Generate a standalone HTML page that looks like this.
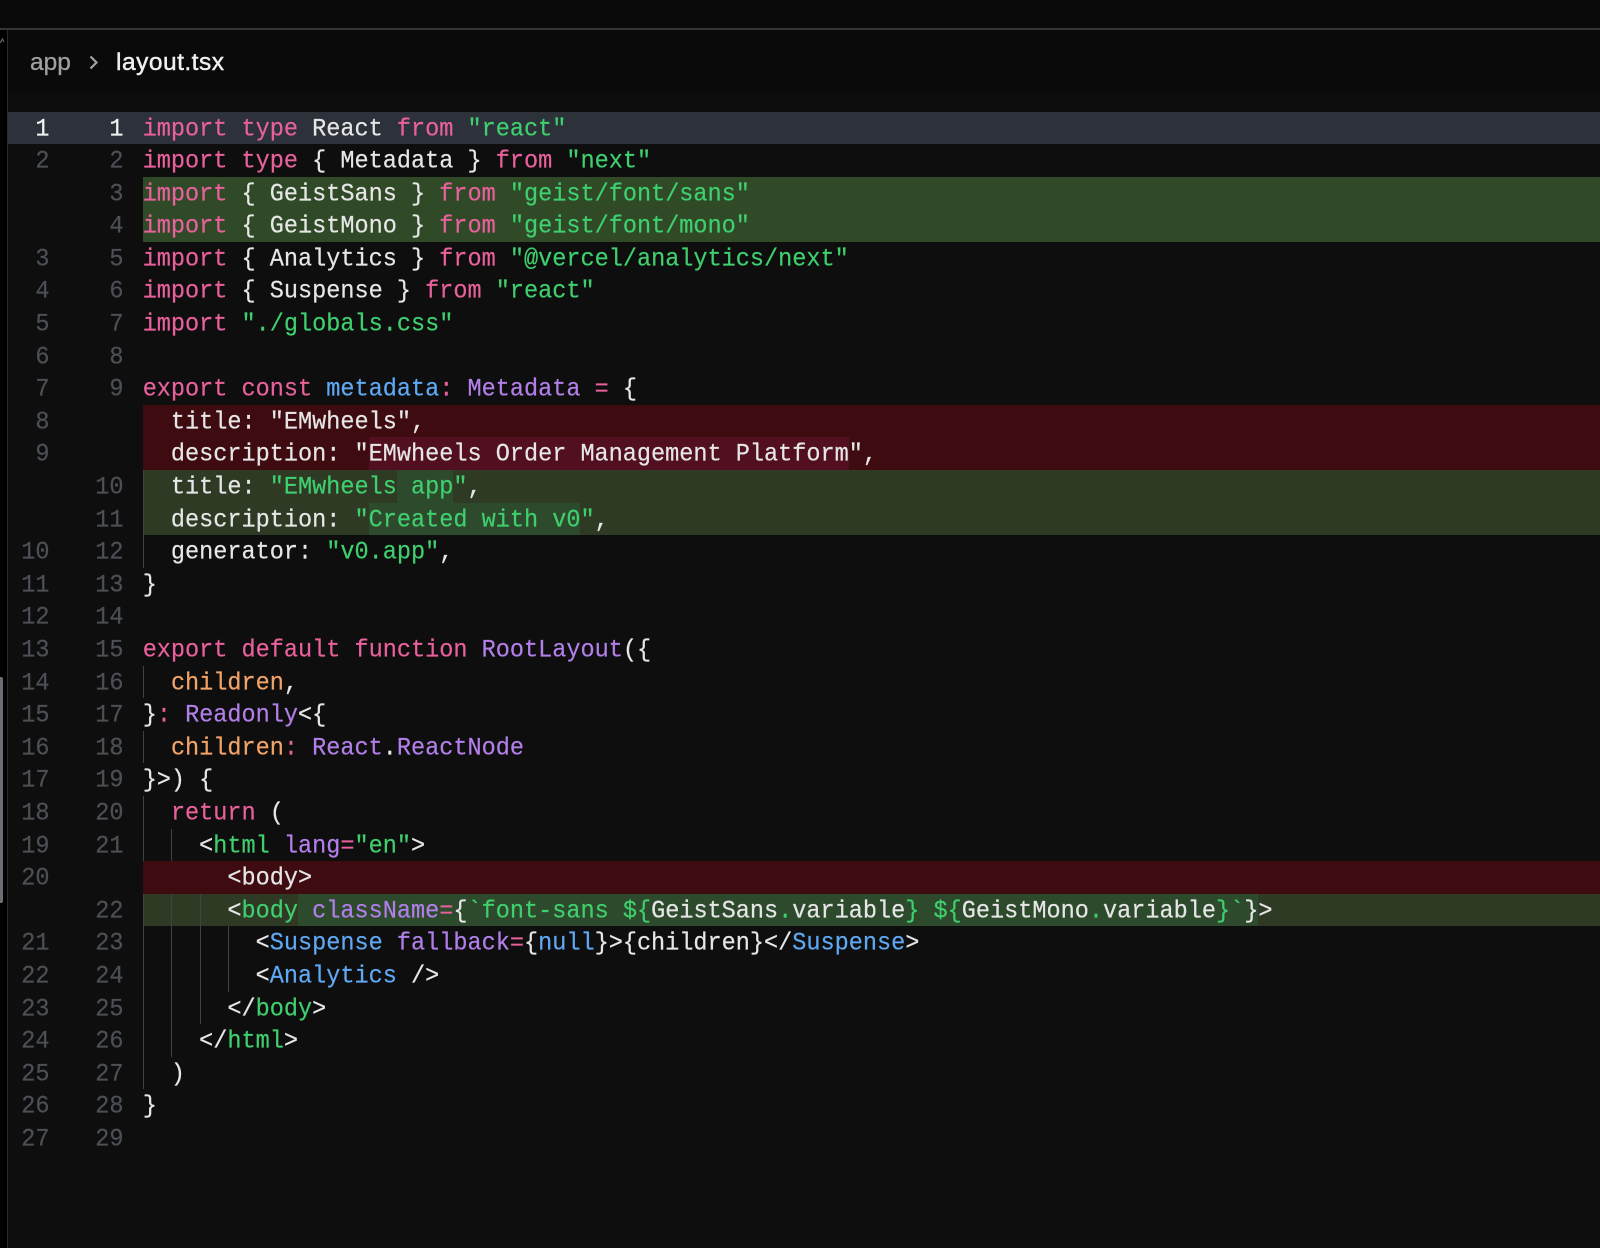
<!DOCTYPE html>
<html lang="en"><head><meta charset="utf-8"><title>layout.tsx</title>
<style>
html,body{margin:0;padding:0;background:#0e0e0e}
#p{position:relative;width:1600px;height:1248px;overflow:hidden;background:#0e0e0e}
#top{position:absolute;left:0;top:0;width:1600px;height:28px;background:#09090a}
#tl{position:absolute;left:0;top:28px;width:1600px;height:2px;background:#333435}
#left{position:absolute;left:0;top:30px;width:7px;height:1218px;background:#000}
#lb{position:absolute;left:7px;top:30px;width:1px;height:1218px;background:#2a2a2b}
#sb{position:absolute;left:0;top:677px;width:3px;height:226px;background:#6d6d73;border-radius:0 2px 2px 0}
#hd{position:absolute;left:8px;top:30px;width:1592px;height:63px;background:#0a0a0b}
#sub{position:absolute;left:8px;top:93px;width:1592px;height:18.5px;background:#0d0d0e}
.bc{position:absolute;top:48px;font:24.5px/30px "Liberation Sans",sans-serif;white-space:pre;-webkit-text-stroke:.25px currentColor;filter:blur(.3px)}
#rows{position:absolute;left:8px;top:111.5px;width:1592px;filter:blur(.3px)}
.r{position:relative;height:32.6px;font:23.54px/32.6px "Liberation Mono",monospace;color:#e6e6e6;white-space:pre}
.o,.n{position:absolute;top:0;text-align:right;color:#4c5056;transform:translateY(2px) scaleY(1.06);-webkit-text-stroke:.2px currentColor}
.o{left:0;width:41.5px}.n{left:60px;width:55.5px}
.c{position:absolute;left:134.7px;top:0;right:0;height:32.6px;overflow:hidden}
.x{display:block;font-weight:normal;transform:translateY(2px) scaleY(1.06);-webkit-text-stroke:.2px currentColor}
.cur{background:#2c313a}.cur .o,.cur .n{color:#f2f2f2}
.ga{background:#304a28}.gl{background:#2f3a25}.rd{background:#3e0b10}
.gi{background:#2e4a2d;padding:10px 0}
.ri{background:#520f20;padding:10px 0}
.g{position:absolute;top:0;width:1px;height:32.6px;background:#3f4246}
.g1{left:135px}.g2{left:163px}.g3{left:191.5px}.g4{left:219.5px}
.k{color:#e8609c}.s{color:#3fcf6e}.t{color:#b27fe9}.b{color:#5fa8f3}.f{color:#f2a368}
</style></head><body><div id="p">
<div id="top"></div><div id="tl"></div><div id="left"></div><div id="lb"></div><div id="sb"></div>
<svg style="position:absolute;left:0;top:37px" width="4" height="8"><path d="M0 6L2.5 2L4 5" fill="none" stroke="#666" stroke-width="1.2"/></svg>
<div id="hd"></div><div id="sub"></div>
<div class="bc" style="left:30px;color:#a1a1a1">app</div>
<svg style="position:absolute;left:87px;top:54px" width="13" height="17"><path d="M3.5 2.5L9.5 8.5L3.5 14.5" fill="none" stroke="#a4a4a4" stroke-width="2.2"/></svg>
<div class="bc" style="left:116px;color:#f0f0f0;-webkit-text-stroke:.45px #f0f0f0;letter-spacing:.5px">layout.tsx</div>
<div id="rows">
<div class="r cur"><span class="o">1</span><span class="n">1</span><span class="c"><b class="x"><span class="k">import type</span> React <span class="k">from</span> <span class="s">"react"</span></b></span></div>
<div class="r"><span class="o">2</span><span class="n">2</span><span class="c"><b class="x"><span class="k">import type</span> { Metadata } <span class="k">from</span> <span class="s">"next"</span></b></span></div>
<div class="r"><span class="n">3</span><span class="c ga"><b class="x"><span class="k">import</span> { GeistSans } <span class="k">from</span> <span class="s">"geist/font/sans"</span></b></span></div>
<div class="r"><span class="n">4</span><span class="c ga"><b class="x"><span class="k">import</span> { GeistMono } <span class="k">from</span> <span class="s">"geist/font/mono"</span></b></span></div>
<div class="r"><span class="o">3</span><span class="n">5</span><span class="c"><b class="x"><span class="k">import</span> { Analytics } <span class="k">from</span> <span class="s">"@vercel/analytics/next"</span></b></span></div>
<div class="r"><span class="o">4</span><span class="n">6</span><span class="c"><b class="x"><span class="k">import</span> { Suspense } <span class="k">from</span> <span class="s">"react"</span></b></span></div>
<div class="r"><span class="o">5</span><span class="n">7</span><span class="c"><b class="x"><span class="k">import</span> <span class="s">"./globals.css"</span></b></span></div>
<div class="r"><span class="o">6</span><span class="n">8</span></div>
<div class="r"><span class="o">7</span><span class="n">9</span><span class="c"><b class="x"><span class="k">export const</span> <span class="b">metadata</span><span class="k">:</span> <span class="t">Metadata</span> <span class="k">=</span> {</b></span></div>
<div class="r"><span class="o">8</span><span class="c rd"><b class="x">  title: "EMwheels",</b></span></div>
<div class="r"><span class="o">9</span><span class="c rd"><b class="x">  description: "<span class="ri">EMwheels Order Management Platform</span>",</b></span></div>
<div class="r"><span class="n">10</span><span class="c gl"><b class="x">  title: <span class="s">"EMwheels</span><span class="gi s"> app</span><span class="s">"</span>,</b></span><i class="g g1"></i></div>
<div class="r"><span class="n">11</span><span class="c gl"><b class="x">  description: <span class="s">"</span><span class="gi s">Created with v0</span><span class="s">"</span>,</b></span><i class="g g1"></i></div>
<div class="r"><span class="o">10</span><span class="n">12</span><span class="c"><b class="x">  generator: <span class="s">"v0.app"</span>,</b></span><i class="g g1"></i></div>
<div class="r"><span class="o">11</span><span class="n">13</span><span class="c"><b class="x">}</b></span></div>
<div class="r"><span class="o">12</span><span class="n">14</span></div>
<div class="r"><span class="o">13</span><span class="n">15</span><span class="c"><b class="x"><span class="k">export default function</span> <span class="t">RootLayout</span>({</b></span></div>
<div class="r"><span class="o">14</span><span class="n">16</span><span class="c"><b class="x">  <span class="f">children</span>,</b></span><i class="g g1"></i></div>
<div class="r"><span class="o">15</span><span class="n">17</span><span class="c"><b class="x">}<span class="k">:</span> <span class="t">Readonly</span>&lt;{</b></span></div>
<div class="r"><span class="o">16</span><span class="n">18</span><span class="c"><b class="x">  <span class="f">children</span><span class="k">:</span> <span class="t">React</span>.<span class="t">ReactNode</span></b></span><i class="g g1"></i></div>
<div class="r"><span class="o">17</span><span class="n">19</span><span class="c"><b class="x">}&gt;) {</b></span></div>
<div class="r"><span class="o">18</span><span class="n">20</span><span class="c"><b class="x">  <span class="k">return</span> (</b></span><i class="g g1"></i></div>
<div class="r"><span class="o">19</span><span class="n">21</span><span class="c"><b class="x">    &lt;<span class="s">html</span> <span class="t">lang</span><span class="k">=</span><span class="s">"en"</span>&gt;</b></span><i class="g g1"></i><i class="g g2"></i></div>
<div class="r"><span class="o">20</span><span class="c rd"><b class="x">      &lt;body&gt;</b></span></div>
<div class="r"><span class="n">22</span><span class="c gl"><b class="x">      &lt;<span class="s">body</span><span class="gi"> <span class="t">className</span><span class="k">=</span>{<span class="s">`font-sans ${</span>GeistSans<span class="s">.</span>variable<span class="s">} ${</span>GeistMono<span class="s">.</span>variable<span class="s">}`</span>}</span>&gt;</b></span><i class="g g1"></i><i class="g g2"></i><i class="g g3"></i></div>
<div class="r"><span class="o">21</span><span class="n">23</span><span class="c"><b class="x">        &lt;<span class="b">Suspense</span> <span class="t">fallback</span><span class="k">=</span>{<span class="b">null</span>}&gt;{children}&lt;/<span class="b">Suspense</span>&gt;</b></span><i class="g g1"></i><i class="g g2"></i><i class="g g3"></i><i class="g g4"></i></div>
<div class="r"><span class="o">22</span><span class="n">24</span><span class="c"><b class="x">        &lt;<span class="b">Analytics</span> /&gt;</b></span><i class="g g1"></i><i class="g g2"></i><i class="g g3"></i><i class="g g4"></i></div>
<div class="r"><span class="o">23</span><span class="n">25</span><span class="c"><b class="x">      &lt;/<span class="s">body</span>&gt;</b></span><i class="g g1"></i><i class="g g2"></i><i class="g g3"></i></div>
<div class="r"><span class="o">24</span><span class="n">26</span><span class="c"><b class="x">    &lt;/<span class="s">html</span>&gt;</b></span><i class="g g1"></i><i class="g g2"></i></div>
<div class="r"><span class="o">25</span><span class="n">27</span><span class="c"><b class="x">  )</b></span><i class="g g1"></i></div>
<div class="r"><span class="o">26</span><span class="n">28</span><span class="c"><b class="x">}</b></span></div>
<div class="r"><span class="o">27</span><span class="n">29</span></div>
</div>
</div></body></html>
